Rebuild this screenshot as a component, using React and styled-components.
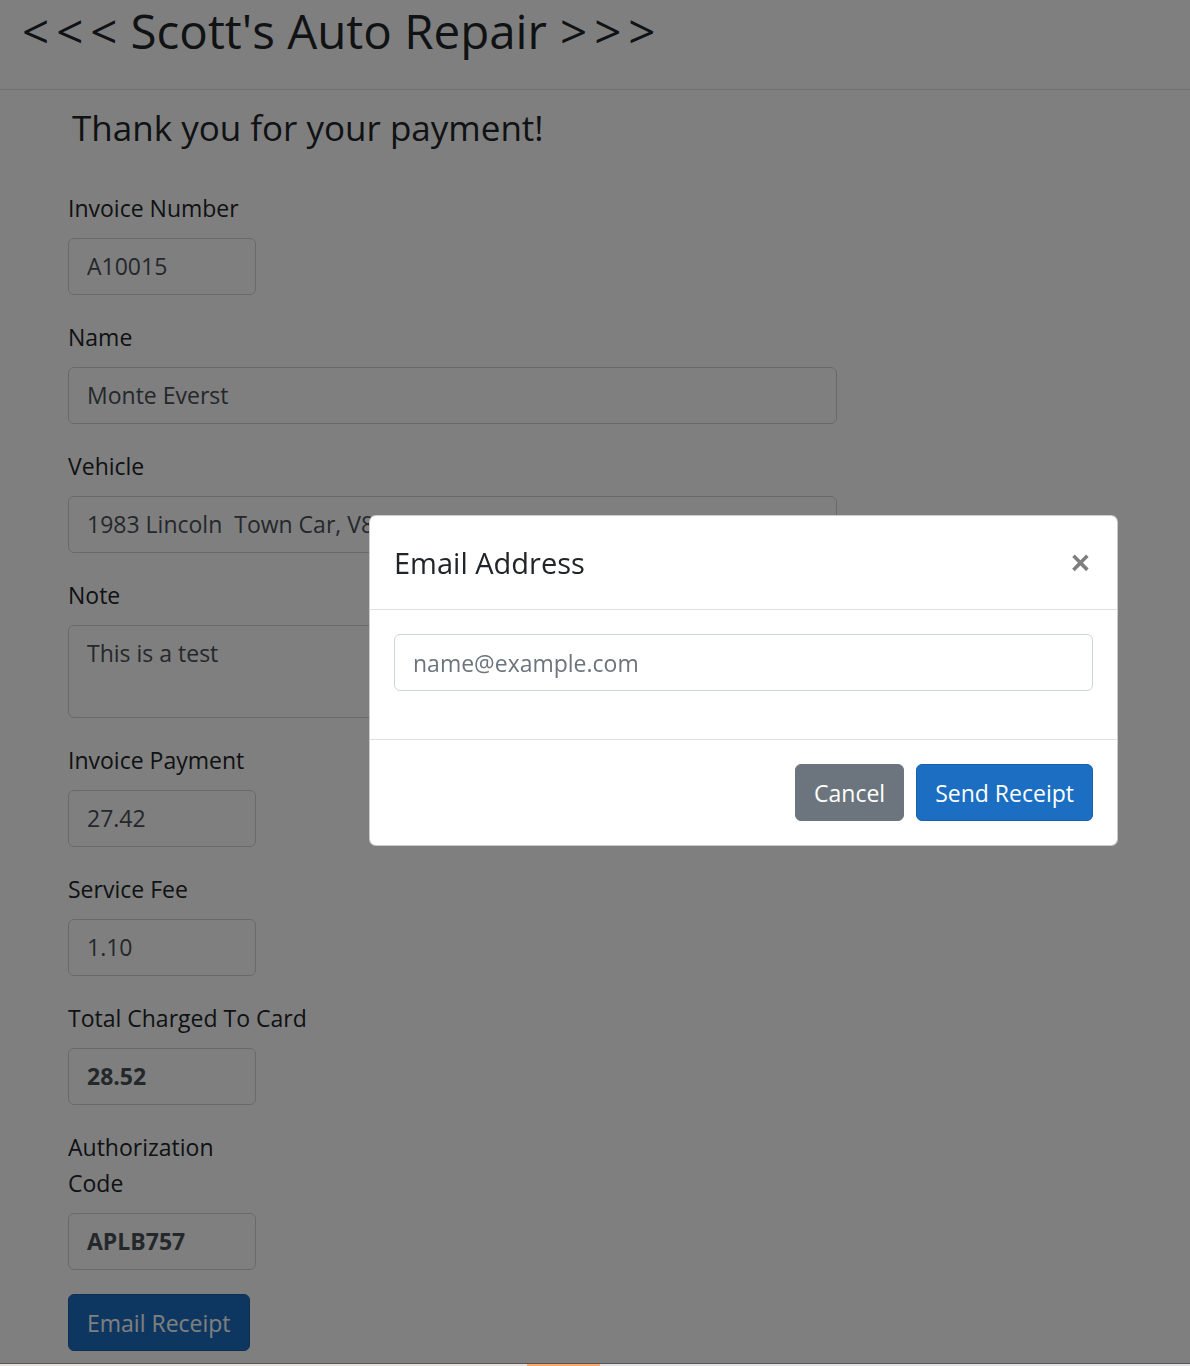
import React from "react";
import styled, { createGlobalStyle } from "styled-components";

const FONT = `"Open Sans", "Noto Sans", "Liberation Sans", sans-serif`;

const Global = createGlobalStyle`
  html, body { margin: 0; padding: 0; }
  body {
    font-family: ${FONT};
    color: #212529;
    background: #ffffff;
    font-size: 23px;
  }
  * { box-sizing: border-box; }
`;

const Header = styled.header`
  height: 90px;
  border-bottom: 1px solid #dee2e6;
  padding: 0 22px;
`;

const Brand = styled.h1`
  margin: 0;
  font-size: 47.5px;
  font-weight: 500;
  line-height: 62px;
  white-space: nowrap;
`;

const Arrows = styled.span`
  display: inline-flex;
  gap: 7px;
  margin-right: ${(p) => (p.$left ? "13px" : "0")};
  margin-left: ${(p) => (p.$left ? "0" : "13px")};
`;

const Main = styled.main`
  padding: 16px 68px 40px;
`;

const Heading = styled.h4`
  margin: 0 0 40px 4px;
  font-size: 35px;
  font-weight: 500;
  line-height: 44px;
`;

const Group = styled.div`
  margin-bottom: 24px;
  width: ${(p) => p.$width || "auto"};
`;

const Label = styled.label`
  display: block;
  line-height: 36px;
  margin-bottom: 12px;
  font-size: 23px;
`;

const Field = styled.div`
  width: ${(p) => p.$width};
  height: ${(p) => (p.$tall ? "93px" : "57px")};
  border: 1px solid #ced4da;
  border-radius: 6px;
  padding: 9px 18px;
  line-height: 36px;
  font-size: 23px;
  color: #495057;
  font-weight: ${(p) => (p.$bold ? 700 : 400)};
  white-space: pre;
  overflow: hidden;
  background: #fff;
`;

const Button = styled.button`
  font-family: ${FONT};
  font-size: 23px;
  line-height: 36px;
  height: 57px;
  padding: 9px 18px;
  border-radius: 6px;
  border: 1px solid ${(p) => (p.$variant === "secondary" ? "#6c757d" : "#1861ac")};
  background: ${(p) => (p.$variant === "secondary" ? "#6c757d" : "#1b6ec2")};
  color: #fff;
  cursor: pointer;
`;

const Backdrop = styled.div`
  position: fixed;
  inset: 0;
  background: rgba(0, 0, 0, 0.5);
  z-index: 10;
`;

const Modal = styled.div`
  position: absolute;
  left: 369px;
  top: 515px;
  width: 749px;
  background: #fff;
  border: 1px solid rgba(0, 0, 0, 0.2);
  border-radius: 7px;
  z-index: 20;
`;

const ModalHeader = styled.div`
  display: flex;
  align-items: center;
  justify-content: space-between;
  padding: 24px;
  border-bottom: 1px solid #dee2e6;
`;

const ModalTitle = styled.h5`
  margin: 0;
  font-size: 29px;
  font-weight: 500;
  line-height: 45px;
`;

const Close = styled.button`
  border: 0;
  background: transparent;
  padding: 0 3px 0 0;
  font-family: "Liberation Sans", sans-serif;
  font-size: 33px;
  font-weight: 700;
  line-height: 1;
  color: #000;
  opacity: 0.5;
  cursor: pointer;
`;

const ModalBody = styled.div`
  padding: 24px;
`;

const EmailInput = styled.input`
  display: block;
  width: 100%;
  height: 57px;
  margin-bottom: 24px;
  border: 1px solid #ced4da;
  border-radius: 6px;
  padding: 9px 18px;
  font-family: ${FONT};
  font-size: 23px;
  line-height: 36px;
  color: #495057;
  &::placeholder { color: #6c757d; opacity: 1; }
`;

const ModalFooter = styled.div`
  display: flex;
  justify-content: flex-end;
  gap: 12px;
  padding: 24px;
  border-top: 1px solid #dee2e6;
`;

const Strip = styled.div`
  position: fixed;
  left: 0;
  right: 0;
  bottom: 0;
  height: 3px;
  display: grid;
  grid-template-columns: 527px 73px 1fr;
  border-top: 1px solid #555;
  z-index: 30;
`;

const StripPart = styled.div`
  background: ${(p) => p.$color};
`;

const fields = [
  { label: "Invoice Number", value: "A10015", width: "188px" },
  { label: "Name", value: "Monte Everst", width: "769px" },
  { label: "Vehicle", value: "1983 Lincoln  Town Car, V8", width: "769px" },
  { label: "Note", value: "This is a test", width: "769px", tall: true },
  { label: "Invoice Payment", value: "27.42", width: "188px" },
  { label: "Service Fee", value: "1.10", width: "188px" },
  { label: "Total Charged To Card", value: "28.52", width: "188px", bold: true },
  { label: "Authorization Code", value: "APLB757", width: "188px", bold: true, narrow: true },
];

export default function App() {
  return (
    <>
      <Global />
      <Header>
        <Brand>
          <Arrows $left>
            <span>{"<"}</span>
            <span>{"<"}</span>
            <span>{"<"}</span>
          </Arrows>
          {"Scott's Auto Repair"}
          <Arrows>
            <span>{">"}</span>
            <span>{">"}</span>
            <span>{">"}</span>
          </Arrows>
        </Brand>
      </Header>
      <Main>
        <Heading>Thank you for your payment!</Heading>
        {fields.map((f) => (
          <Group key={f.label} $width={f.narrow ? "188px" : undefined}>
            <Label>{f.label}</Label>
            <Field $width={f.width} $tall={f.tall} $bold={f.bold}>
              {f.value}
            </Field>
          </Group>
        ))}
        <Button>Email Receipt</Button>
      </Main>
      <Backdrop />
      <Modal role="dialog">
        <ModalHeader>
          <ModalTitle>Email Address</ModalTitle>
          <Close aria-label="Close">×</Close>
        </ModalHeader>
        <ModalBody>
          <EmailInput type="email" placeholder="name@example.com" />
        </ModalBody>
        <ModalFooter>
          <Button $variant="secondary">Cancel</Button>
          <Button>Send Receipt</Button>
        </ModalFooter>
      </Modal>
      <Strip>
        <StripPart $color="#e9e1dc" />
        <StripPart $color="#fbaa6b" />
        <StripPart $color="#e3e3e6" />
      </Strip>
    </>
  );
}
